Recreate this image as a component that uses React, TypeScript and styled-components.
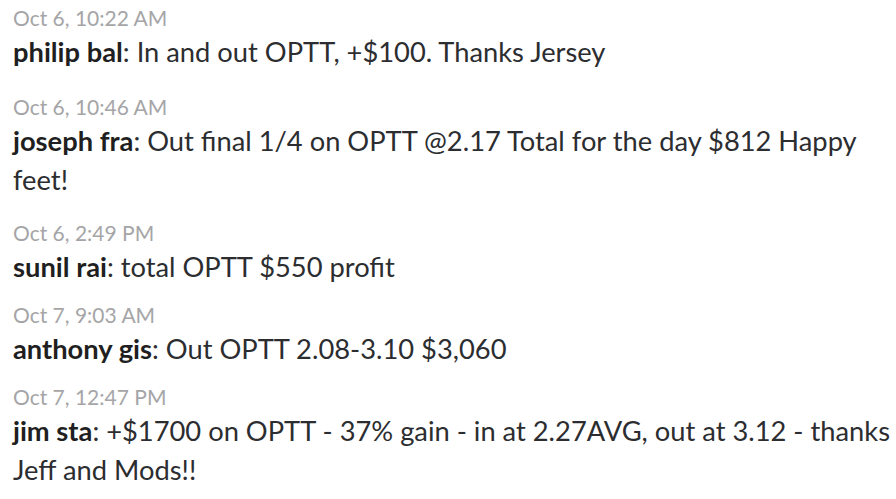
import React from 'react';
import styled, { createGlobalStyle } from 'styled-components';

const GlobalStyle = createGlobalStyle`
  body {
    margin: 0;
    background: #ffffff;
    font-family: Lato, "Open Sans", sans-serif;
  }
`;

const Feed = styled.div`
  width: 883px;
  padding: 4px 0 0 13px;
  display: flex;
  flex-direction: column;
`;

const Message = styled.div<{ $gap: number }>`
  margin-bottom: ${(p) => p.$gap}px;
`;

const Timestamp = styled.div`
  font-size: 21px;
  line-height: 28px;
  color: #a5a5a7;
`;

const Body = styled.div`
  font-size: 27.3px;
  line-height: 39px;
  color: #2c2d30;
`;

const Name = styled.span`
  font-weight: 700;
  color: #1f1f22;
`;

type Item = { time: string; name: string; text: string; gap: number };

const messages: Item[] = [
  { time: 'Oct 6, 10:22 AM', name: 'philip bal', text: 'In and out OPTT, +$100. Thanks Jersey', gap: 22 },
  { time: 'Oct 6, 10:46 AM', name: 'joseph fra', text: 'Out final 1/4 on OPTT @2.17 Total for the day $812 Happy feet!', gap: 20 },
  { time: 'Oct 6, 2:49 PM', name: 'sunil rai', text: 'total OPTT $550 profit', gap: 15 },
  { time: 'Oct 7, 9:03 AM', name: 'anthony gis', text: 'Out OPTT 2.08-3.10 $3,060', gap: 15 },
  { time: 'Oct 7, 12:47 PM', name: 'jim sta', text: '+$1700 on OPTT - 37% gain - in at 2.27AVG, out at 3.12 - thanks Jeff and Mods!!', gap: 15 },
];

const App: React.FC = () => {
  return (
    <>
      <GlobalStyle />
      <Feed>
        {messages.map((m) => (
          <Message key={m.time} $gap={m.gap}>
            <Timestamp>{m.time}</Timestamp>
            <Body>
              <Name>{m.name}</Name>: {m.text}
            </Body>
          </Message>
        ))}
      </Feed>
    </>
  );
};

export default App;
